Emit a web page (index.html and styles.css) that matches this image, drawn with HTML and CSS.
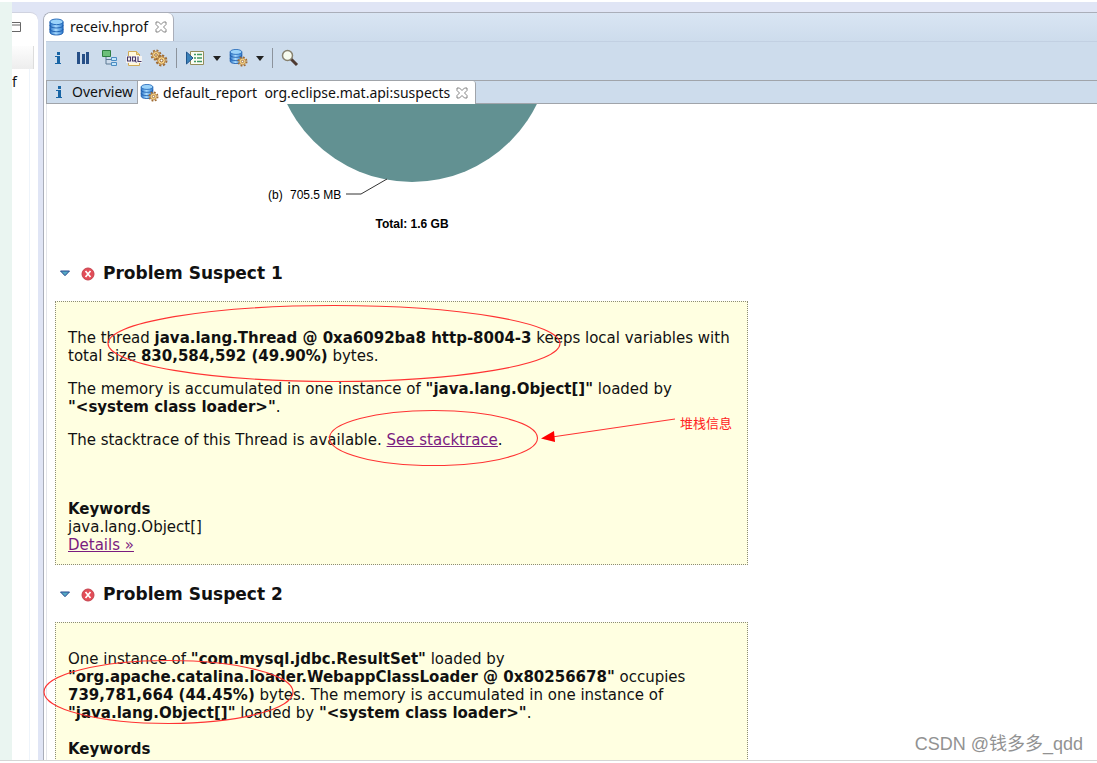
FILE: index.html
```html
<!DOCTYPE html>
<html lang="en">
<head>
<meta charset="utf-8">
<title>receiv.hprof</title>
<link rel="stylesheet" href="styles.css">
</head>
<body>
<svg class="defs" width="0" height="0" aria-hidden="true">
  <defs>
    <linearGradient id="blue" x1="0" x2="1"><stop offset="0" stop-color="#2670c4"/><stop offset=".45" stop-color="#a9dcff"/><stop offset="1" stop-color="#2b78cc"/></linearGradient>
    <symbol id="db" viewBox="0 0 16 18">
      <path d="M1 3.5v11C1 16.500 4 17.500 8 17.500s7-1 7-3v-11z" fill="url(#blue)"/>
      <path d="M1 3.500v11c0 2 3 3 7 3s7-1 7-3v-11M1 7c0 2 3 3 7 3s7-1 7-3M1 11c0 2 3 3 7 3s7-1 7-3" fill="none" stroke="#1b5cad"/>
      <ellipse cx="8" cy="3.500" rx="7" ry="3" fill="#9bd3fa" stroke="#2268b8"/>
    </symbol>
    <symbol id="gear" viewBox="0 0 12 12">
      <circle cx="6" cy="6" r="4.600" fill="none" stroke="#a06c34" stroke-width="1.800" stroke-dasharray="2 1.600"/>
      <circle cx="6" cy="6" r="3.500" fill="#f8d78c" stroke="#b07a3a" stroke-width=".8"/>
      <circle cx="6" cy="6" r="1.300" fill="#fff" stroke="#85521e" stroke-width=".8"/>
    </symbol>
    <symbol id="dbgear" viewBox="0 0 19 18">
      <use href="#db" x="0" y="0" width="14" height="15"/>
      <use href="#gear" x="8" y="7" width="11" height="11"/>
    </symbol>
    <symbol id="info" viewBox="0 0 8 14">
      <path d="M3 1h3v3H3zM1 5h5v7h1v1H1v-1h2V6H1z" fill="#1865a5"/>
    </symbol>
    <symbol id="close" viewBox="0 0 12 12">
      <path d="M1 1h2.500L6 3.500 8.500 1H11v2.500L8.500 6 11 8.500V11H8.500L6 8.500 3.500 11H1V8.500L3.500 6 1 3.500z" fill="#fff" stroke="#777" stroke-width=".9"/>
    </symbol>
    <symbol id="error" viewBox="0 0 14 14">
      <circle cx="7" cy="7" r="6" fill="#e34d58" stroke="#c5424d"/>
      <path d="M4.500 4l5 6M9.500 4l-5 6" stroke="#fff" stroke-width="1.700"/>
    </symbol>
    <symbol id="twisty" viewBox="0 0 12 7">
      <path d="M1.500 1h9L6 5.700z" fill="#54a9c4" stroke="#27488f"/>
    </symbol>
  </defs>
</svg>
<div class="shell">
  <div class="edge"></div>
  <aside class="side">
    <div class="side-head"><svg width="10" height="12" viewBox="0 0 10 12"><path d="M0 1.500h8.500v9H0M0 4h8" fill="none" stroke="#666"/></svg></div>
    <div class="side-bar"></div>
    <div class="side-text">f</div>
  </aside>
  <div class="sash"></div>
  <main class="editor">
    <div class="file-tabs">
      <div class="file-tab">
        <svg width="15" height="18"><use href="#db"/></svg>
        <span>receiv.hprof</span>
        <button class="plain" aria-label="Close receiv.hprof"><svg width="12" height="12"><use href="#close"/></svg></button>
      </div>
    </div>
    <div class="toolbar">
      <button class="plain tool info" aria-label="Overview"><svg width="8" height="14"><use href="#info"/></svg></button>
      <button class="plain tool bars" aria-label="Histogram"><svg width="14" height="14" viewBox="0 0 14 14"><path d="M1 1h3v12H1zM6 3h3v10H6zM10 1h3v12h-3z" fill="#264f87"/></svg></button>
      <button class="plain tool" aria-label="Dominator tree"><svg width="17" height="18" viewBox="0 0 17 18"><path d="M5 8v7h5M5 10.500h5" fill="none" stroke="#5b7893"/><path d="M1.500 1.500h8v6h-8z" fill="#6cbf79" stroke="#2e7e42"/><path d="M10.500 8.500h5v3h-5zM10.500 13.500h5v3h-5z" fill="#c5e6fa" stroke="#4b8cc2"/></svg></button>
      <button class="plain tool" aria-label="OQL"><svg width="16" height="17" viewBox="0 0 16 17"><path d="M2.500 1.500h8l3 3v11h-11z" fill="#fff8dc" stroke="#d0ab57"/><path d="M10.500 1.500v3h3" fill="#ecd28b" stroke="#d0ab57"/><path d="M0 6h16v7H0z" fill="#f5f3f1"/><path d="M1.500 7h3v4h-3zM6.500 7h3v4h-3zM8.500 10l2 2.500M12 6.500V11.500h3.500" fill="none" stroke="#443568" stroke-width="1.100"/></svg></button>
      <button class="plain tool" aria-label="Thread overview"><svg width="18" height="18"><use href="#gear" x="0" y="0" width="12" height="12"/><use href="#gear" x="5" y="5" width="13" height="13"/></svg></button>
      <span class="divider"></span>
      <button class="plain tool" aria-label="Run report"><svg width="20" height="16" viewBox="0 0 20 16"><path d="M5.500 1.500h13v13h-13z" fill="#fbfdf3" stroke="#948d5a"/><path d="M9 4.500h2M9 8h2M9 11.500h2M12 4.500h5M12 8h5M12 11.500h5" stroke="#429965" stroke-width="1.300"/><path d="M1.500 2v12L8 8z" fill="#3a82ba" stroke="#20558c"/></svg></button>
      <button class="plain arrow" aria-label="Report menu"><svg width="8" height="5"><path d="M0 0h8L4 5z" fill="#222"/></svg></button>
      <button class="plain tool" aria-label="Query browser"><svg width="19" height="18"><use href="#dbgear"/></svg></button>
      <button class="plain arrow" aria-label="Query menu"><svg width="8" height="5"><path d="M0 0h8L4 5z" fill="#222"/></svg></button>
      <span class="divider"></span>
      <button class="plain tool" aria-label="Find"><svg width="18" height="18" viewBox="0 0 18 18"><path d="M10 10l6 6" stroke="#4e3a32" stroke-width="3"/><circle cx="6.500" cy="6.500" r="5" fill="#f7fbef" stroke="#87816f" stroke-width="1.500"/></svg></button>
    </div>
    <div class="page-tabs">
      <div class="page-tab"><svg width="8" height="14"><use href="#info"/></svg><span>Overview</span></div>
      <div class="page-tab active">
        <svg width="19" height="18"><use href="#dbgear"/></svg>
        <span>default_report&nbsp; org.eclipse.mat.api:suspects</span>
        <button class="plain" aria-label="Close report"><svg width="12" height="12"><use href="#close"/></svg></button>
      </div>
    </div>
    <div class="report">
      <svg class="chart" width="560" height="140" viewBox="0 0 560 140">
        <circle cx="365" cy="-61" r="139" fill="#629192"/>
        <path d="M299 90h15l26-15" fill="none" stroke="#333"/>
        <text x="221" y="95">(b)</text>
        <text x="243" y="95">705.5 MB</text>
        <text class="total" x="365" y="124" text-anchor="middle">Total: 1.6 GB</text>
      </svg>
      <section>
        <h2><svg width="12" height="7"><use href="#twisty"/></svg><svg width="14" height="14"><use href="#error"/></svg><span>Problem Suspect 1</span></h2>
        <div class="suspect">
          <p>The thread <b>java.lang.Thread @ 0xa6092ba8 http-8004-3</b> keeps local variables with total size <b>830,584,592 (49.90%)</b> bytes.</p>
          <p>The memory is accumulated in one instance of <b>"java.lang.Object[]"</b> loaded by <b class="name">"&lt;system class loader&gt;"</b>.</p>
          <p>The stacktrace of this Thread is available. <a href="#stacktrace">See stacktrace</a>.</p>
          <div class="keywords far"><b>Keywords</b><span>java.lang.Object[]</span><a href="#details">Details »</a></div>
        </div>
      </section>
      <section>
        <h2><svg width="12" height="7"><use href="#twisty"/></svg><svg width="14" height="14"><use href="#error"/></svg><span>Problem Suspect 2</span></h2>
        <div class="suspect">
          <p>One instance of <b>"com.mysql.jdbc.ResultSet"</b> loaded by <b>"org.apache.catalina.loader.WebappClassLoader @ 0x80256678"</b> occupies <b class="name">739,781,664 (44.45%)</b> bytes. The memory is accumulated in one instance of <b>"java.lang.Object[]"</b> loaded by <b class="name">"&lt;system class loader&gt;"</b>.</p>
          <div class="keywords"><b>Keywords</b><span>java.lang.Object[]</span></div>
        </div>
      </section>
    </div>
  </main>
  <svg class="marks" width="760" height="760" viewBox="0 0 760 760">
    <g fill="none" stroke="#f33" stroke-width="1.100">
      <ellipse cx="334" cy="343.500" rx="226" ry="38"/>
      <ellipse cx="433.500" cy="438" rx="104" ry="27.500"/>
      <ellipse cx="168.500" cy="692" rx="124.500" ry="31.500"/>
      <path d="M675 419L552 437"/>
    </g>
    <path d="M541 438.500L554 431l1 11z" fill="#f00"/>
    <text x="680" y="428">堆栈信息</text>
  </svg>
  <div class="watermark">CSDN @钱多多_qdd</div>
</div>
</body>
</html>
```
FILE: styles.css
```css
* { box-sizing: border-box; }
body {
  margin: 0;
  background: #fff;
  color: #111;
  font: 15px/18px "DejaVu Sans", Verdana, sans-serif;
}
svg { display: block; flex: none; }
.defs { position: absolute; }
.plain {
  display: flex;
  padding: 0;
  border: 0;
  background: none;
}
.shell {
  position: relative;
  display: grid;
  grid-template-columns: 12px 26px 5px minmax(0, 1fr);
  height: calc(100vh - 2px);
  border-top: 2px solid #fff;
  border-bottom: 1px solid #d5d5d5;
  overflow: hidden;
  background: #e0e5f5;
}
.edge { background: #eaf5f1; }
.side {
  margin-top: 10px;
  border-top: 1px solid #d0d3e0;
  border-top-right-radius: 8px;
  background: #fff;
  overflow: hidden;
}
.side-head { padding-top: 8px; height: 33px; }
.side-bar {
  height: 23px;
  width: 22px;
  background: linear-gradient(#fdfdfd, #ededed);
  border-right: 1px solid #ddd;
}
.side-text {
  height: 100vh;
  width: 17px;
  padding-top: 4px;
  border-right: 1px solid #eef4fb;
  font-family: "Noto Sans", sans-serif;
  font-size: 14px;
  box-sizing: content-box;
}
.editor {
  display: flex;
  flex-direction: column;
  min-width: 0;
  margin-top: 10px;
  border: 1px solid #aaaeb9;
  border-width: 1px 0 0 1px;
  border-top-left-radius: 8px;
  background: #fff;
  overflow: hidden;
  padding-left: 2px;
}
.file-tabs {
  flex: none;
  height: 28px;
  display: flex;
  background: linear-gradient(#d9e5f3, #cddcec);
  font-family: "Noto Sans", sans-serif;
  font-size: 14px;
  margin-left: -2px;
}
.file-tab {
  display: flex;
  align-items: center;
  gap: 6px;
  padding: 0 6px 0 5px;
  background: #fff;
  border-right: 1px solid #aaaeb9;
  border-top-right-radius: 6px;
}
.file-tab .plain { margin-left: 1px; }
.toolbar {
  flex: none;
  height: 39px;
  display: flex;
  align-items: center;
  gap: 8px;
  padding: 0 8px 6px;
  background: #cddcec;
  border-top: 1px solid #c2d0e2;
}
.tool.info { margin-right: 6px; }
.tool.bars { margin-right: 3px; }
.divider { width: 1px; height: 20px; background: #8c939c; }
.page-tabs {
  flex: none;
  display: flex;
  height: 24px;
  background: #cddcec;
  border: 1px solid #a0a4aa;
  border-width: 1px 0 1px 1px;
  font-family: "Noto Sans", sans-serif;
  font-size: 14px;
}
.page-tab {
  display: flex;
  align-items: center;
  gap: 9px;
  padding: 0 4px 0 8px;
}
.page-tab.active {
  gap: 4px;
  margin-bottom: -1px;
  padding: 0 7px 0 2px;
  background: #fff;
  border: 1px solid #a0a4aa;
  border-width: 0 1px;
  border-top-right-radius: 3px;
}
.page-tab.active .plain { margin-left: 2px; }
.report {
  flex: 1;
  min-height: 0;
  overflow: hidden;
  border-left: 1px solid #e3e5ea;
}
.chart text { font: 12px "Liberation Sans", Arial, sans-serif; }
.chart .total { font-weight: bold; }
section { padding: 0 0 0 8px; }
h2 {
  display: flex;
  align-items: center;
  height: 57px;
  margin: 0;
  padding: 0 0 0 4px;
  font-size: 17px;
  line-height: 24px;
}
h2 svg { margin-top: 2px; }
h2 svg + svg { margin: 2px 8px 0 10px; }
.suspect {
  max-width: 693px;
  border: 1px dotted #8c8c78;
  background: #ffffe1;
  padding: 27px 12px 10px;
}
.suspect p { margin: 0 0 15px; }
.suspect a { color: #7a1b80; }
.name { white-space: nowrap; }
.keywords {
  display: flex;
  flex-direction: column;
  align-items: flex-start;
  padding-top: 3px;
}
.keywords.far { padding-top: 36px; }
.marks { position: absolute; left: 0; top: -2px; pointer-events: none; }
.marks text { font: 13px "Noto Sans CJK SC", sans-serif; fill: #f22; }
.watermark {
  position: absolute;
  right: 14px;
  bottom: 4px;
  color: #929292;
  font: 18px/24px "Liberation Sans", "Noto Sans CJK SC", sans-serif;
}
```
